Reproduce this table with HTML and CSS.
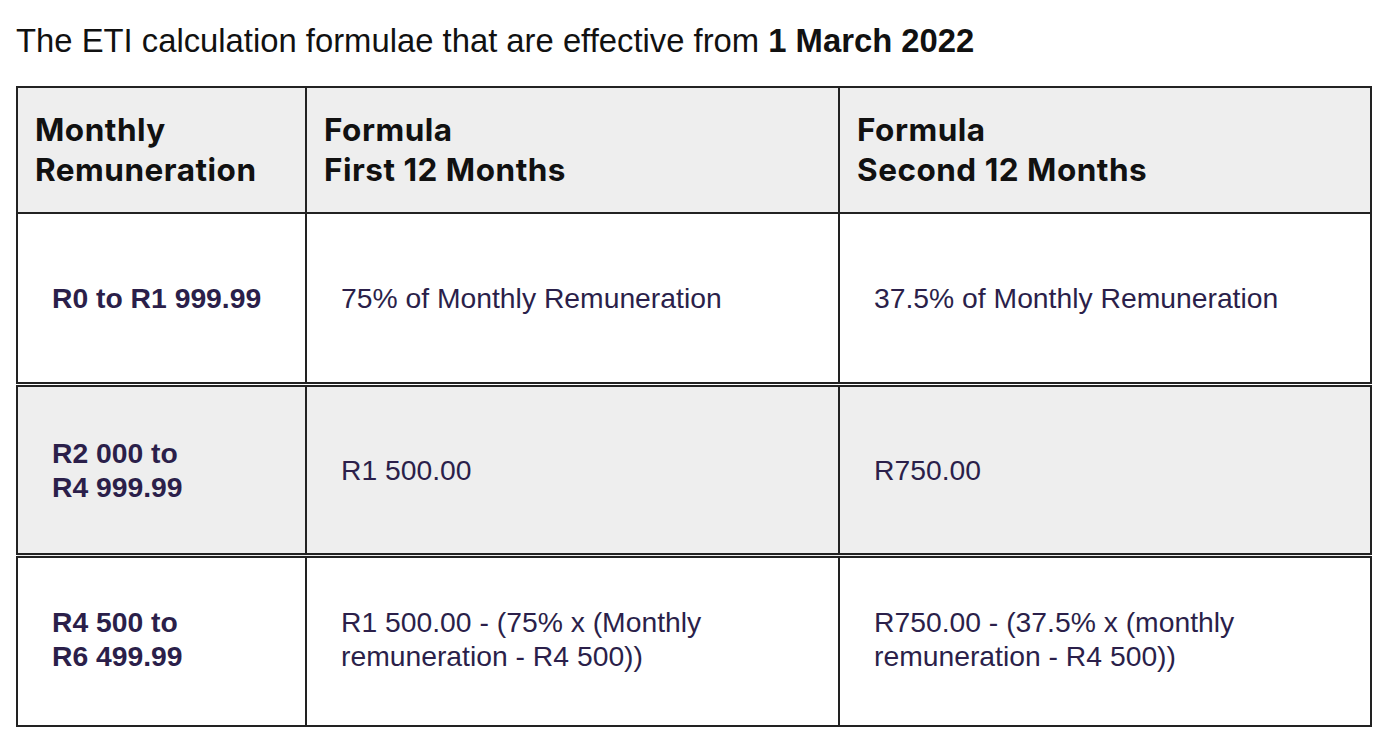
FILE: index.html
```html
<!DOCTYPE html>
<html>
<head>
<meta charset="utf-8">
<link rel="stylesheet" href="styles.css">
</head>
<body>
<p class="intro">The ETI calculation formulae that are effective from <b>1 March 2022</b></p>
<table class="eti">
  <colgroup>
    <col class="c1"><col class="c2"><col class="c3">
  </colgroup>
  <thead>
    <tr>
      <th>Monthly<br>Remuneration</th>
      <th>Formula<br>First 12 Months</th>
      <th>Formula<br>Second 12 Months</th>
    </tr>
  </thead>
  <tbody>
    <tr class="r1">
      <td class="band">R0 to R1 999.99</td>
      <td>75% of Monthly Remuneration</td>
      <td>37.5% of Monthly Remuneration</td>
    </tr>
    <tr class="r2 shade">
      <td class="band">R2 000 to<br>R4 999.99</td>
      <td>R1 500.00</td>
      <td>R750.00</td>
    </tr>
    <tr class="r3">
      <td class="band">R4 500 to<br>R6 499.99</td>
      <td>R1 500.00 - (75% x (Monthly<br>remuneration - R4 500))</td>
      <td>R750.00 - (37.5% x (monthly<br>remuneration - R4 500))</td>
    </tr>
  </tbody>
</table>
</body>
</html>
```

FILE: styles.css
```css
html, body {
  margin: 0;
  padding: 0;
  background: #ffffff;
}

body {
  font-family: "Liberation Sans", Arial, sans-serif;
}

.intro {
  margin: 0;
  padding: 21px 0 0 16px;
  font-size: 32.8px;
  line-height: 40px;
  color: #111111;
  height: 65px;
}

.intro b {
  font-weight: 700;
}

.eti {
  margin-left: 16px;
  border-collapse: collapse;
  table-layout: fixed;
  width: 1354px;
}

.c1 { width: 289px; }
.c2 { width: 533px; }
.c3 { width: 532px; }

.eti th,
.eti td {
  border: 2px solid #222222;
  vertical-align: middle;
}

.eti th {
  height: 124px;
  background: #eeeeee;
  text-align: left;
  padding: 0 0 0 17px;
  font-family: Inter, "Noto Sans", sans-serif;
  font-weight: 700;
  font-size: 31.5px;
  line-height: 40px;
  letter-spacing: 0.5px;
  color: #111111;
}

.eti td {
  padding: 0 0 0 34px;
  font-size: 28.3px;
  line-height: 34px;
  color: #2b1f4a;
}

.eti td.band {
  font-weight: 700;
}

.r1 td { height: 168px; }
.r2 td { height: 166px; }
.r3 td { height: 161px; padding-bottom: 6px; }

.r2 td,
.r3 td {
  border-top: 5px double #222222;
}

.shade td {
  background: #eeeeee;
}
```
